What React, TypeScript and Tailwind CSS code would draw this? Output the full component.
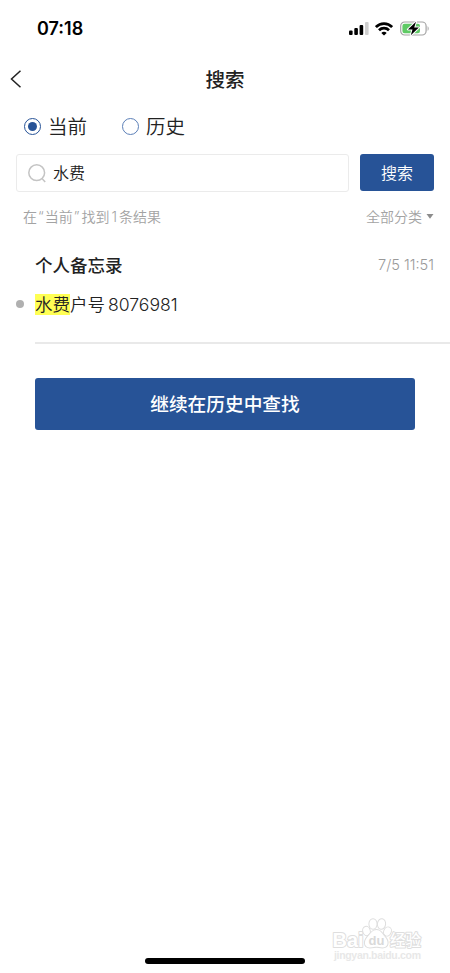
import { useState } from 'react';
import clsx from 'clsx';

type Scope = 'current' | 'history';

const scopes: { id: Scope; label: string }[] = [
  { id: 'current', label: '当前' },
  { id: 'history', label: '历史' },
];

function SignalIcon() {
  return (
    <svg width="20" height="13" viewBox="0 0 20 13" className="block">
      <rect x="0" y="8.5" width="3.6" height="4.5" rx="1" fill="#000" />
      <rect x="5.3" y="6" width="3.6" height="7" rx="1" fill="#000" />
      <rect x="10.6" y="3" width="3.6" height="10" rx="1" fill="#000" />
      <rect x="16" y="0" width="3.6" height="13" rx="1" fill="#cfcfcf" />
    </svg>
  );
}

function WifiIcon() {
  return (
    <svg width="18" height="14" viewBox="0 0 18 14" className="block" fill="none" stroke="#000" strokeWidth="2.7">
      <path d="M0.9 5.1C5.4 0.5 12.6 0.5 17.1 5.1" />
      <path d="M4 8.3C6.8 5.5 11.2 5.5 14 8.3" />
      <path d="M6.3 10.9C7.8 9.4 10.2 9.4 11.7 10.9L9 13.6Z" fill="#000" stroke="none" />
    </svg>
  );
}

function BatteryIcon() {
  return (
    <svg width="30" height="15" viewBox="0 0 30 15" className="block">
      <rect x="0.7" y="1" width="25.4" height="13" rx="4" fill="none" stroke="#a3a3a3" strokeWidth="1.2" />
      <path d="M27.6 5.2C29 5.8 29 9.2 27.6 9.8Z" fill="#a3a3a3" />
      <rect x="2.4" y="2.8" width="17.6" height="9.4" rx="2.2" fill="#5fca65" />
      <path d="M16 0.8L7.9 8.4H12.5L10.8 14.2L18.9 6.5H14.2Z" fill="#000" stroke="#fff" strokeWidth="2" strokeLinejoin="round" paintOrder="stroke" />
    </svg>
  );
}

function StatusBar() {
  return (
    <div className="flex h-[57px] items-center justify-between pl-[37px] pr-[20px]">
      <span className="pt-px font-['Inter'] text-[18px] font-semibold leading-none text-black">07:18</span>
      <div className="flex items-center">
        <SignalIcon />
        <span className="ml-[6px]">
          <WifiIcon />
        </span>
        <span className="ml-[7px]">
          <BatteryIcon />
        </span>
      </div>
    </div>
  );
}

function ScopeRadio({ label, checked, onSelect }: { label: string; checked: boolean; onSelect: () => void }) {
  return (
    <button onClick={onSelect} className="flex items-center">
      <span
        className={clsx(
          'flex h-[17px] w-[17px] items-center justify-center rounded-full border',
          checked ? 'border-[#275397]' : 'border-[#5c80b8]'
        )}
      >
        {checked && <span className="h-[9px] w-[9px] rounded-full bg-[#275397]" />}
      </span>
      <span className="ml-[7px] pt-[3px] text-[19.5px] font-[350] leading-none text-[#222]">{label}</span>
    </button>
  );
}

function Watermark() {
  return (
    <div className="pointer-events-none absolute left-[331px] top-[917px]">
      <svg width="96" height="48" viewBox="0 0 96 48" fill="#fff" stroke="#dedede" strokeWidth="2" strokeLinejoin="round" paintOrder="stroke">
        <text x="1.5" y="30" fontFamily="Liberation Sans" fontWeight="700" fontSize="20.5" textLength="31" lengthAdjust="spacingAndGlyphs">Bai</text>
        <ellipse cx="35.5" cy="14" rx="3.3" ry="4.2" transform="rotate(-15 35.5 14)" />
        <ellipse cx="42" cy="7" rx="3.6" ry="4.8" />
        <ellipse cx="50.5" cy="7" rx="3.6" ry="4.8" transform="rotate(8 50.5 7)" />
        <ellipse cx="56.5" cy="14.5" rx="3.3" ry="4.2" transform="rotate(22 56.5 14.5)" />
        <path d="M45.500 13C49.500 13 51 16.500 54 20C58 24.500 57.500 30.500 51.500 30.500C48.500 30.500 47.500 29.800 45.500 29.800C43.500 29.800 42 30.500 39 30.500C33 30.500 32.500 24.500 36.500 20C39.500 16.500 41.500 13 45.500 13Z" />
        <text x="37.5" y="27.5" fontFamily="Liberation Sans" fontWeight="700" fontSize="13" fill="#d9d9d9" stroke="none">du</text>
        <text x="59" y="28.5" fontFamily="Noto Sans CJK SC" fontWeight="500" fontSize="15.5">经验</text>
        <text x="3" y="42" fontFamily="Liberation Sans" fontWeight="700" fontSize="10.5" fill="#e8e8e8" stroke="none" textLength="87">jingyan.baidu.com</text>
      </svg>
    </div>
  );
}

export default function App() {
  const [scope, setScope] = useState<Scope>('current');
  const [keyword, setKeyword] = useState('水费');

  return (
    <div className="relative flex h-[973px] w-[450px] flex-col overflow-hidden bg-white font-['Inter','Noto_Sans_CJK_SC',sans-serif] text-[#222]">
      <StatusBar />

      {/* Header */}
      <header className="mt-px grid h-[42px] grid-cols-[1fr_auto_1fr] items-center">
        <button className="pl-[10px]">
          <svg width="12" height="18" viewBox="0 0 12 18" className="block" fill="none" stroke="#222" strokeWidth="1.5">
            <path d="M10.500 0.700L1.500 9L10.500 17.300" />
          </svg>
        </button>
        <h1 className="pt-[3px] text-[19.5px] font-medium leading-none">搜索</h1>
      </header>

      {/* Search scope */}
      <div className="flex h-[52px] items-center gap-[35px] pl-[24px]">
        {scopes.map((s) => (
          <ScopeRadio key={s.id} label={s.label} checked={scope === s.id} onSelect={() => setScope(s.id)} />
        ))}
      </div>

      {/* Search box */}
      <div className="mt-[2px] flex h-[38px] gap-[11px] pl-[16px] pr-[16px]">
        <div className="flex flex-1 items-center rounded-[3px] border border-[#ebebeb] pl-[11px]">
          <svg width="19" height="19" viewBox="0 0 19 19" className="block shrink-0" fill="none" stroke="#c4c4c4" strokeWidth="1.5">
            <circle cx="8.7" cy="8.7" r="7.9" />
            <path d="M14 14.500L17.200 18" />
          </svg>
          <input
            value={keyword}
            onChange={(e) => setKeyword(e.target.value)}
            className="ml-[6px] w-0 flex-1 text-[16px] font-[350] outline-none"
          />
        </div>
        <button className="h-[37px] w-[74px] rounded-[3px] bg-[#275397] pt-px text-[16px] font-[350] leading-none text-white">搜索</button>
      </div>

      <div className="flex h-[49px] items-center justify-between pl-[23px] pr-[16px] text-[14px] font-[350] leading-none text-[#a3a3a3]">
        <span>
          在<span className="ml-px mr-px">“</span>当前<span className="ml-px mr-[2px]">”</span>找到
          <span className="mx-[2px]">1</span>条结果
        </span>
        <button className="flex items-center">
          全部分类
          <svg width="8" height="5" viewBox="0 0 8 5" className="ml-[4px] block">
            <path d="M0.500 0H7.500L4 4.700Z" fill="#8c8c8c" />
          </svg>
        </button>
      </div>

      {/* Results */}
      <section>
        <div className="mt-[4px] flex h-[40px] items-center justify-between pl-[35px] pr-[16px]">
          <h2 className="pt-[2px] text-[17.5px] font-medium leading-none">个人备忘录</h2>
          <span className="pt-px text-[14.6px] font-light leading-none text-[#999]">7/5 11:51</span>
        </div>
        <div className="flex h-[38px] items-center pl-[16px]">
          <span className="h-[8px] w-[8px] rounded-full bg-[#b0b0b0]" />
          <p className="ml-[11px] flex items-center text-[17.5px] font-[350] leading-[21px]">
            <mark className="h-[21px] bg-[#ffff54] text-[#222]">水费</mark>
            户号
            <span className="ml-[3px] text-[17.6px]">8076981</span>
          </p>
        </div>
        <div className="ml-[35px] mt-[19px] h-[2px] bg-[#e9e9e9]" />
      </section>

      <button className="ml-[35px] mr-[35px] mt-[34px] h-[52px] rounded-[3px] bg-[#275397] pt-[3px] text-[18.7px] font-medium leading-none text-white">
        继续在历史中查找
      </button>

      <Watermark />

      {/* Home indicator */}
      <div className="mb-[9px] mt-auto h-[6px] w-[160px] self-center rounded-full bg-black" />
    </div>
  );
}
